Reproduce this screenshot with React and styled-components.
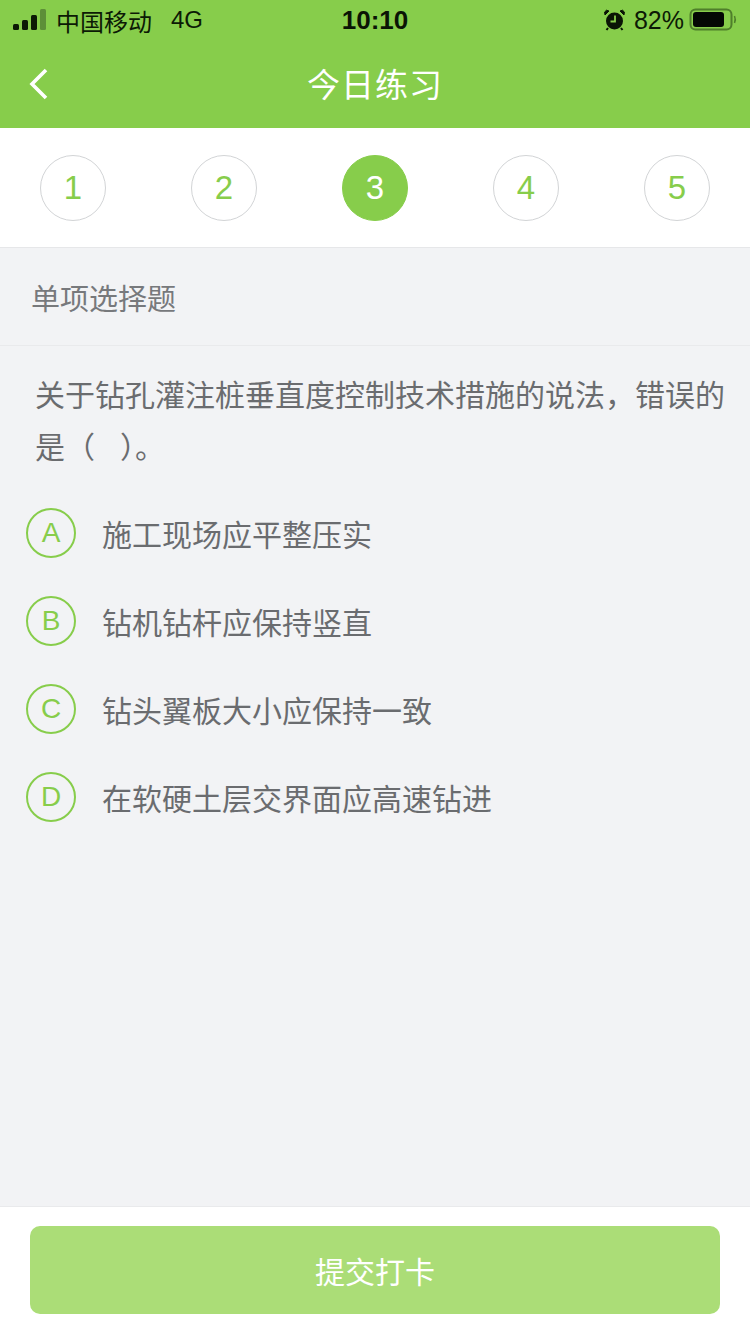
import React from 'react';
import styled, { createGlobalStyle } from 'styled-components';

const GlobalStyle = createGlobalStyle`
    html, body {
        margin: 0;
        padding: 0;
        background: #f2f3f5;
    }
    * {
        box-sizing: border-box;
    }
`;

const Page = styled.div`
    width: 750px;
    height: 1334px;
    display: flex;
    flex-direction: column;
    background: #f2f3f5;
    font-family: "Liberation Sans", "Noto Sans CJK SC", sans-serif;
    overflow: hidden;
`;

const Header = styled.div`
    height: 128px;
    background: #87cd4b;
    display: flex;
    flex-direction: column;
`;

const StatusBar = styled.div`
    height: 40px;
    padding: 0 13px;
    display: grid;
    grid-template-columns: 1fr auto 1fr;
    align-items: center;
    color: #0c1a05;
`;

const StatusLeft = styled.div`
    display: flex;
    align-items: center;
    font-size: 24px;
`;

const Carrier = styled.span`
    margin-left: 9px;
`;

const Network = styled.span`
    margin-left: 19px;
`;

const Time = styled.div`
    font-size: 26px;
    font-weight: 700;
    color: #0a1405;
`;

const StatusRight = styled.div`
    display: flex;
    align-items: center;
    justify-content: flex-end;
    font-size: 25px;
    padding-right: 0;
`;

const Percent = styled.span`
    margin-left: 9px;
    margin-right: 5px;
`;

const NavBar = styled.div`
    flex: 1;
    display: flex;
    align-items: center;
    justify-content: center;
    position: relative;
    padding-bottom: 2px;
`;

const BackIcon = styled.svg`
    position: absolute;
    left: 28px;
    top: 27px;
`;

const Title = styled.div`
    font-size: 33px;
    color: #fff;
    letter-spacing: 1px;
`;

const Steps = styled.div`
    height: 120px;
    background: #fff;
    border-bottom: 1px solid #e6e7e9;
    padding: 0 40px;
    display: flex;
    align-items: center;
    justify-content: space-between;
`;

const Step = styled.div`
    width: 66px;
    height: 66px;
    border-radius: 50%;
    display: flex;
    align-items: center;
    justify-content: center;
    font-size: 33px;
    color: ${(p) => (p.$active ? '#fff' : '#87cd4b')};
    background: ${(p) => (p.$active ? '#87cd4b' : '#fff')};
    border: 1px solid ${(p) => (p.$active ? '#87cd4b' : '#d2d4d6')};
`;

const SectionLabel = styled.div`
    height: 98px;
    padding: 0 31px;
    display: flex;
    align-items: center;
    font-size: 29px;
    color: #77797c;
    border-bottom: 1px solid #e9eaec;
`;

const Question = styled.div`
    padding: 24px 20px 0 35px;
    font-size: 30px;
    line-height: 52px;
    color: #6a6c6f;
`;

const Options = styled.div`
    flex: 1;
    padding: 15px 0 0 26px;
    display: flex;
    flex-direction: column;
`;

const Option = styled.div`
    height: 88px;
    display: flex;
    align-items: center;
`;

const Letter = styled.div`
    width: 50px;
    height: 50px;
    border-radius: 50%;
    border: 2px solid #87cd4b;
    display: flex;
    align-items: center;
    justify-content: center;
    font-size: 28px;
    color: #87cd4b;
`;

const OptionText = styled.div`
    margin-left: 26px;
    font-size: 30px;
    color: #6a6c6f;
`;

const Footer = styled.div`
    height: 128px;
    background: #fff;
    border-top: 1px solid #e9eaec;
    padding: 19px 30px 0;
`;

const SubmitButton = styled.div`
    height: 88px;
    border-radius: 10px;
    background: #abdd77;
    color: #fff;
    font-size: 30px;
    display: flex;
    align-items: center;
    justify-content: center;
`;

const Signal = () => (
    <svg width="34" height="22" viewBox="0 0 34 22">
        <rect x="0" y="15" width="6" height="6" rx="1.5" fill="#0c1a05" />
        <rect x="9" y="11" width="6" height="10" rx="1.5" fill="#0c1a05" />
        <rect x="18" y="6" width="6" height="15" rx="1.5" fill="#0c1a05" />
        <rect x="27" y="0" width="6" height="21" rx="1.5" fill="#5d8f38" />
    </svg>
);

const Alarm = () => (
    <svg width="21" height="22" viewBox="0 0 21 22">
        <circle cx="10.5" cy="12" r="8.5" fill="#0a1405" />
        <path d="M1 6 L5 2 L2.5 1.2 L0.6 3 Z M20 6 L16 2 L18.5 1.2 L20.4 3 Z" fill="#0a1405" stroke="#0a1405" strokeWidth="1" />
        <path d="M4 19 L2.5 21 M17 19 L18.5 21" stroke="#0a1405" strokeWidth="2" />
        <path d="M11 6.5 V12.5 H6.5" stroke="#87cd4b" strokeWidth="1.8" fill="none" />
    </svg>
);

const Battery = () => (
    <svg width="48" height="24" viewBox="0 0 48 24">
        <rect x="1.5" y="1.5" width="41" height="20" rx="5" fill="none" stroke="#4f7f2b" strokeWidth="2" />
        <rect x="4" y="4" width="31" height="15" rx="3" fill="#040804" />
        <path d="M45.5 8 Q47 11.5 45.5 15" stroke="#4f7f2b" strokeWidth="1.5" fill="none" />
    </svg>
);

const stepList = [1, 2, 3, 4, 5];

const optionList = [
    { key: 'A', text: '施工现场应平整压实' },
    { key: 'B', text: '钻机钻杆应保持竖直' },
    { key: 'C', text: '钻头翼板大小应保持一致' },
    { key: 'D', text: '在软硬土层交界面应高速钻进' },
];

const App = () => {
    return (
        <>
            <GlobalStyle />
            <Page>
                <Header>
                    <StatusBar>
                        <StatusLeft>
                            <Signal />
                            <Carrier>中国移动</Carrier>
                            <Network>4G</Network>
                        </StatusLeft>
                        <Time>10:10</Time>
                        <StatusRight>
                            <Alarm />
                            <Percent>82%</Percent>
                            <Battery />
                        </StatusRight>
                    </StatusBar>
                    <NavBar>
                        <BackIcon width="22" height="34" viewBox="0 0 22 34">
                            <path d="M18 3 L4 17 L18 31" fill="none" stroke="#fff" strokeWidth="3.6" />
                        </BackIcon>
                        <Title>今日练习</Title>
                    </NavBar>
                </Header>
                <Steps>
                    {stepList.map((n) => (
                        <Step key={n} $active={n === 3}>
                            {n}
                        </Step>
                    ))}
                </Steps>
                <SectionLabel>单项选择题</SectionLabel>
                <Question>关于钻孔灌注桩垂直度控制技术措施的说法，错误的是（ &nbsp; ）。</Question>
                <Options>
                    {optionList.map((o) => (
                        <Option key={o.key}>
                            <Letter>{o.key}</Letter>
                            <OptionText>{o.text}</OptionText>
                        </Option>
                    ))}
                </Options>
                <Footer>
                    <SubmitButton>提交打卡</SubmitButton>
                </Footer>
            </Page>
        </>
    );
};

export default App;
